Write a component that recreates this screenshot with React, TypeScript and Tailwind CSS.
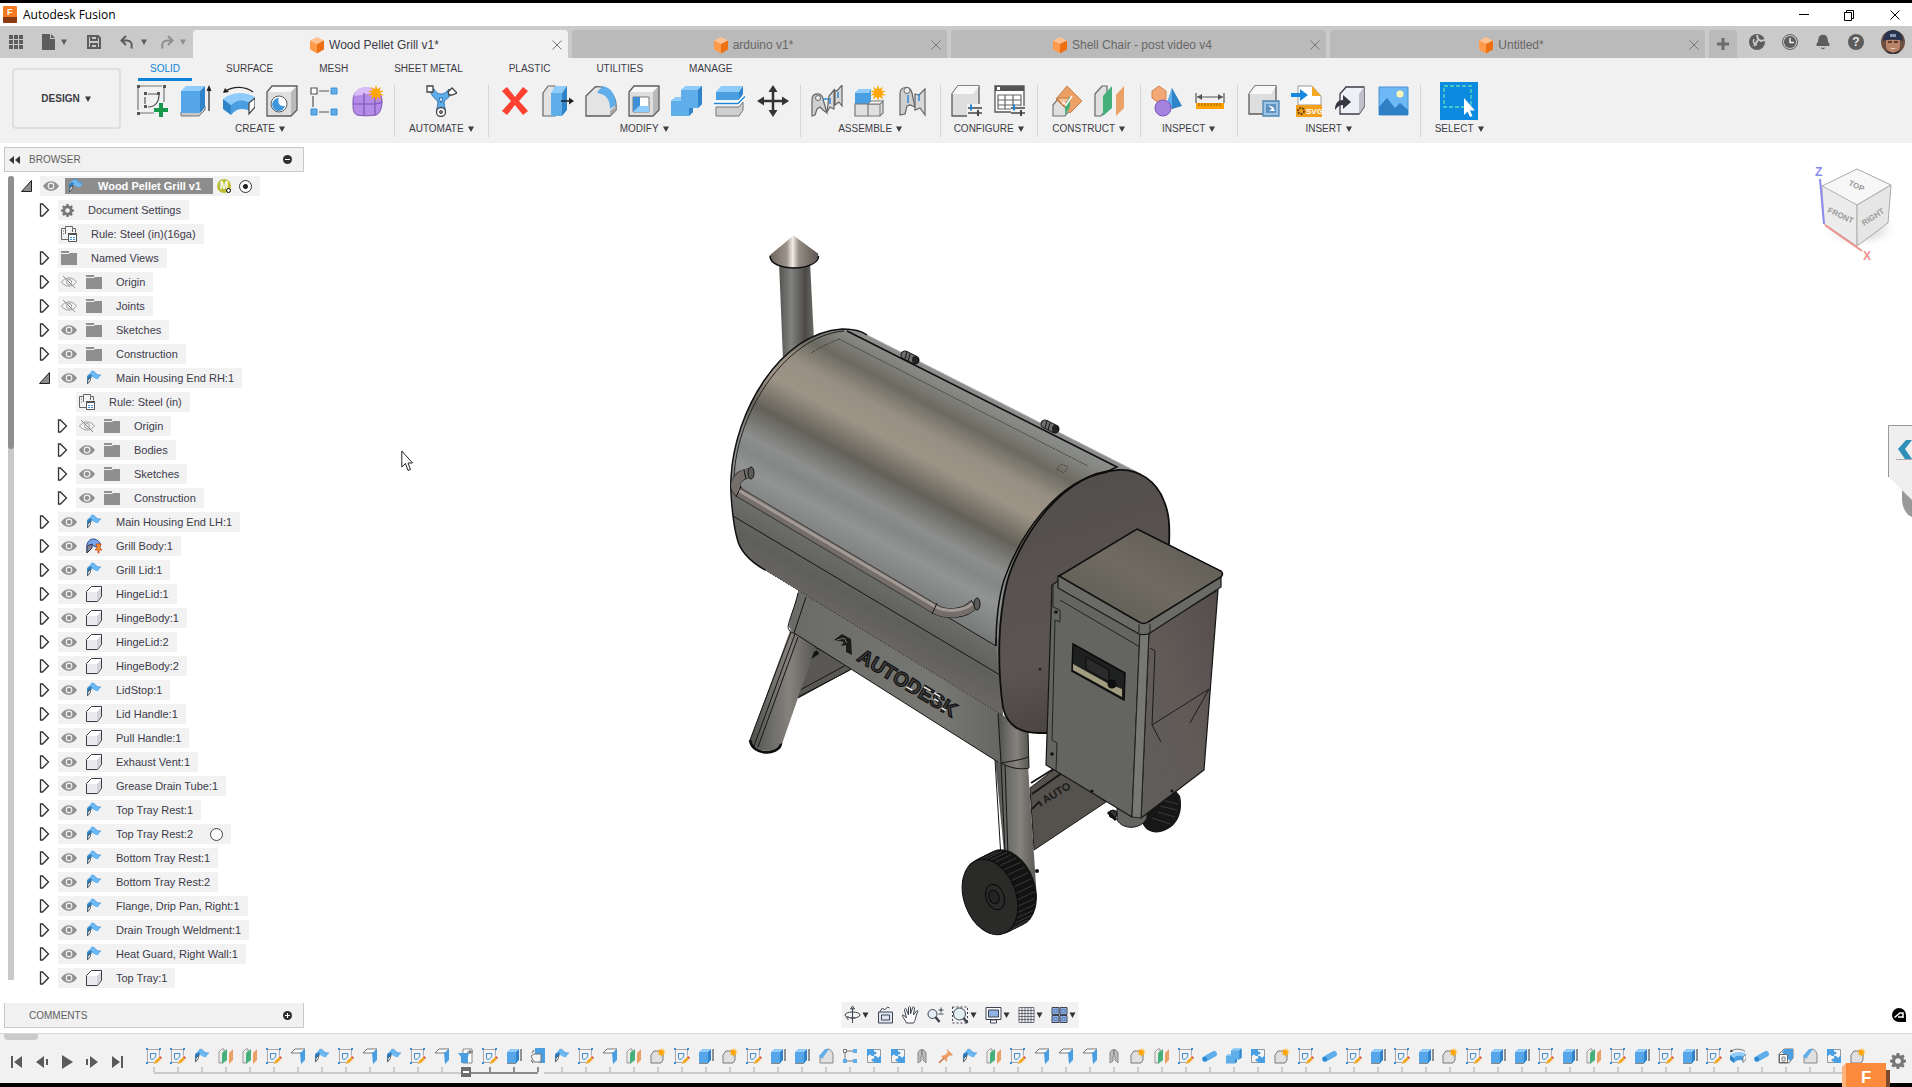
import type { ComponentType, ReactNode } from "react";
import { Bell } from "lucide-react";
import clsx from "clsx";

type IconProps = { className?: string };

/* ---------- small shared glyphs ---------- */

function Caret({ className }: IconProps) {
  return (
    <svg viewBox="0 0 8 8" className={clsx("h-2 w-2 shrink-0", className)} fill="currentColor" aria-hidden="true">
      <path d="M1 1.5h6L4 7z" />
    </svg>
  );
}

function Close({ className }: IconProps) {
  return (
    <svg viewBox="0 0 12 12" className={className} stroke="currentColor" fill="none" aria-hidden="true">
      <path d="M1.5 1.5l9 9M10.5 1.5l-9 9" />
    </svg>
  );
}

function Gear({ className }: IconProps) {
  return (
    <svg viewBox="0 0 16 16" className={className} fill="currentColor" aria-hidden="true">
      <path
        fillRule="evenodd"
        d="M6.7 0h2.6l.4 2.2 1.3.6 1.9-1.3 1.8 1.8-1.3 1.9.6 1.3 2.1.3v2.5l-2.1.4-.6 1.3 1.2 1.9-1.8 1.8-1.8-1.3-1.3.6L9.3 16H6.7l-.4-2.1-1.3-.5-1.9 1.2-1.8-1.8 1.3-1.8L2 9.7 0 9.3V6.8l2.1-.4.6-1.3-1.3-1.8 1.8-1.8L5 2.8l1.3-.6zM8 5.2a2.8 2.8 0 100 5.6 2.8 2.8 0 000-5.6z"
      />
    </svg>
  );
}

function CubeIcon({ className }: IconProps) {
  return (
    <svg viewBox="0 0 16 18" className={className} aria-hidden="true">
      <path d="M8 1l7 3.5L8 8 1 4.5z" fill="#ffc191" />
      <path d="M1 4.5L8 8v9.5l-7-4z" fill="#ff9b4a" />
      <path d="M15 4.5L8 8v9.5l7-4z" fill="#ee7012" />
    </svg>
  );
}

/* ---------- ribbon icons, drawn on a 32px grid ---------- */

function Art({ children, box = 32 }: { children: ReactNode; box?: number }) {
  return (
    <svg viewBox={`0 0 ${box} ${box}`} className="h-full w-full" fill="none" aria-hidden="true">
      {children}
    </svg>
  );
}

const STAR = "M8 0l1.4 4.2L13 1.8l-1.6 4L16 6l-4 2 4 2.4-4.4-.2 1.4 4-3.6-2.4L8 16l-1.4-4.2L3 14.2l1.4-4L0 10.4 4 8 0 6l4.6-.2L3 1.8l3.6 2.4z";

function GreyBox() {
  return (
    <>
      <path d="M1 7L6 1h25v24l-6 6H1z" fill="#dedede" />
      <path d="M1 7L6 1h25l-6 6z" fill="#f8f8f8" />
      <path d="M25 7l6-6v24l-6 6z" fill="#b9b9b9" />
      <path d="M1 7L6 1h25v24l-6 6H1z" stroke="#5c5c5c" strokeWidth="1.3" />
    </>
  );
}

function Sliders() {
  return (
    <>
      <path d="M17 23h14M17 28h14" stroke="#444" strokeWidth="1.3" />
      <path d="M20 19.5v6" stroke="#1f86d8" strokeWidth="2" />
      <path d="M27 25v6" stroke="#444" strokeWidth="2" />
    </>
  );
}

function CreateSketch() {
  return (
    <Art>
      <path d="M3 1h22M1 3v22M27 3v14M3 28h14" stroke="#777" strokeWidth="1.2" />
      <path d="M11 9h10M8 12v7M22 10c0 7-4 12-11 12" stroke="#555" strokeWidth="1.2" />
      <path d="M0 0h3v3H0zM26 0h3v3h-3zM0 27h3v3H0zM7 7h3v3H7zM20 7h3v3h-3zM7 20h3v3H7z" fill="#555" />
      <path d="M22 18h4v5h5v4h-5v5h-4v-5h-5v-4h5z" fill="#17984a" />
    </Art>
  );
}

function Extrude() {
  return (
    <Art>
      <path d="M1 27v4h18l6-6v-4z" fill="#c9c9c9" stroke="#777" />
      <path d="M1 6l5-5h19l-5 5z" fill="#8fcbfb" />
      <path d="M1 6h19v22H1z" fill="#55a6e8" />
      <path d="M20 6l5-5v21l-5 6z" fill="#2f84c9" />
      <path d="M29 26V4" stroke="#222" strokeWidth="1.2" />
      <path d="M29 0l2.500 6h-5z" fill="#222" />
    </Art>
  );
}

function Revolve() {
  return (
    <Art>
      <path d="M3 6c7-5 19-5 27 1" stroke="#222" strokeWidth="1.2" />
      <path d="M0 8l2-5 4 4z" fill="#222" />
      <path d="M0 14c9-7 21-8 32-2l-5 6c-7-4-13-4-19 2z" fill="#8fcbfb" />
      <path d="M0 14l8 6v10l-8-6z" fill="#2f84c9" />
      <path d="M8 20c6-6 12-6 19-2v8c-7-3-13-3-19 4z" fill="#4a9fe2" />
      <path d="M26 18l6-5v9l-6 7z" fill="#fff" stroke="#444" strokeWidth="1.2" />
    </Art>
  );
}

function Hole() {
  return (
    <Art>
      <GreyBox />
      <circle cx="13" cy="19" r="8" fill="#fff" stroke="#5c5c5c" />
      <path d="M13 13a6.500 6.500 0 106 8c-5 1-8-3-6-8z" fill="#3f96dc" />
    </Art>
  );
}

function Pattern() {
  return (
    <Art>
      <path d="M10 6h10M4 11v11M10 27h10" stroke="#555" strokeWidth="1.2" />
      <path d="M2 3h6v6H2z" fill="#fff" stroke="#555" strokeWidth="1.2" />
      <path d="M22 3h6v6h-6zM2 24h6v6H2zM22 24h6v6h-6z" fill="#5fade9" stroke="#3e92d6" />
    </Art>
  );
}

function CreateForm() {
  return (
    <Art>
      <path d="M5 6c4-4 14-4 20 0 4 3 5 6 5 11s-2 12-6 13c-5 1-15 1-19 0-4-2-4-6-4-11s0-10 4-13z" fill="#b58be8" stroke="#7d55b5" />
      <path d="M5 5c4-4 14-4 20 0-2 4-18 5-23 6 0-2 1-4 3-6z" fill="#d8bdf7" />
      <path d="M12 8v23M1 19h22c3 0 6-1 7-3M23 9v21" stroke="#7d55b5" strokeWidth="1.2" />
      <path d={STAR} transform="translate(16 0)" fill="#ffa600" />
    </Art>
  );
}

function Automate() {
  return (
    <Art>
      <path d="M5 5c2 8 6 8 8 12 0 5-2 7-1 10h8c1-3-1-5-1-10 2-4 6-4 8-10l-3-3c-3 4-6 5-8 5S11 8 9 4z" fill="#5fade9" stroke="#2c6fae" />
      <path d="M14 13h4l-2 5z" fill="#fff" stroke="#2c6fae" />
      <path d="M2 1h6v6H2z" fill="#fff" stroke="#444" strokeWidth="1.3" />
      <path d="M23 7l4-4 5 5-5 2-3 0z" fill="#fff" stroke="#444" strokeWidth="1.3" />
      <circle cx="16" cy="27" r="4.500" fill="#fff" stroke="#444" strokeWidth="1.3" />
      <circle cx="16" cy="27" r="1.500" fill="#888" stroke="#444" />
    </Art>
  );
}

function Delete() {
  return (
    <Art>
      <path d="M3 6l5-4 8 10 8-10 5 4-9 10 9 10-5 4-8-10-8 10-5-4 9-10z" fill="#fc4130" />
    </Art>
  );
}

function PressPull() {
  return (
    <Art>
      <path d="M1 8l5-7h7v30H1z" fill="#e2e2e2" stroke="#666" strokeWidth="1.2" />
      <path d="M9 8l4-7h12l-5 7z" fill="#8fcbfb" />
      <path d="M9 8h11v23H9z" fill="#5fade9" />
      <path d="M20 8l5-7v24l-5 6z" fill="#2f84c9" />
      <path d="M19 16h9" stroke="#222" strokeWidth="1.5" />
      <path d="M32 16l-5-3.500v7z" fill="#222" />
    </Art>
  );
}

function Fillet() {
  return (
    <Art>
      <path d="M1 11L10 2c11-2 21 8 21 18v5l-6 6H1z" fill="#e4e4e4" stroke="#5c5c5c" strokeWidth="1.3" />
      <path d="M25 26l6-5v4l-6 6z" fill="#a8a8a8" />
      <path d="M12 1h5c9 1 14 9 14 19l-6 4c0-9-3-14-12-16-2-1 3-5 5-6z" fill="#5fade9" />
    </Art>
  );
}

function Shell() {
  return (
    <Art>
      <GreyBox />
      <path d="M5 12h16v15H5z" fill="#fff" stroke="#777" />
      <path d="M5 12h7v9l-7 6z" fill="#3f8fd6" />
      <path d="M5 27l6-6h10v6z" fill="#8fcbfb" />
    </Art>
  );
}

function Combine() {
  return (
    <Art>
      <path d="M0 16l5-4h5V5l5-4h16v18l-4 4h-5v4l-4 4H0z" fill="#5fade9" />
      <path d="M10 5l5-4h16l-4 4zM0 16l5-4h5v4z" fill="#8fcbfb" />
      <path d="M27 5l4-4v18l-4 4zM18 31l4-4v-4h-4z" fill="#2f84c9" />
    </Art>
  );
}

function SplitBody() {
  return (
    <Art>
      <path d="M2 7l5-6h22l-4 6z" fill="#8fcbfb" />
      <path d="M2 7h23v8H2z" fill="#4a9fe2" />
      <path d="M25 7l4-6v8l-4 6z" fill="#2f84c9" />
      <path d="M2 22h23l4-5v8l-4 6H2z" fill="#cfcfcf" stroke="#777" />
      <path d="M0 18h24l8-7" stroke="#fff" strokeWidth="4" />
      <path d="M0 18.500h24l7-7" stroke="#1f86d8" strokeWidth="1.5" />
    </Art>
  );
}

function Move() {
  return (
    <Art>
      <path d="M16 4v24M4 16h24" stroke="#333" strokeWidth="2.500" />
      <path d="M16 0l4.500 7h-9zM16 32l4.500-7h-9zM0 16l7-4.500v9zM32 16l-7-4.500v9z" fill="#333" />
    </Art>
  );
}

function Joint() {
  return (
    <Art>
      <path d="M1 31V15c0-8 10-8 11-1l4 14-4-3-3-3-3 2-2 6z" fill="#cfcfcf" stroke="#666" strokeWidth="1.2" />
      <circle cx="7" cy="13" r="2.500" fill="#eee" stroke="#666" />
      <path d="M16 27l2-16 5-6v19l-4-2zM24 5l2 1 5-6v21l-3-4-4 3z" fill="#d8d8d8" stroke="#666" strokeWidth="1.2" />
      <path d="M12 14h5M19 13v6M27 7v6" stroke="#2f8bd8" strokeWidth="1.5" />
    </Art>
  );
}

function NewComponent() {
  return (
    <Art>
      <path d="M1 8l4-4h12v12l-2 3H1z" fill="#4a9fe2" />
      <path d="M1 8l4-4h12l-2 4z" fill="#8fcbfb" />
      <path d="M1 19h13v12H1zM14 19h12l3-3v12l-3 3H14z" fill="#e0e0e0" stroke="#777" strokeWidth="1.2" />
      <path d="M14 19l3-3h12l-3 3zM26 19v12" fill="#f6f6f6" stroke="#777" />
      <path d={STAR} transform="translate(16 0)" fill="#ffa600" />
    </Art>
  );
}

function AsBuiltJoint() {
  return (
    <Art>
      <path d="M3 30V9c0-8 10-9 12-1l3 14-5-2-3 1-2 8z" fill="#cfcfcf" stroke="#666" strokeWidth="1.2" />
      <circle cx="10" cy="5.500" r="3" fill="#eee" stroke="#666" />
      <path d="M18 9l4 1 6-6v26l-5-7-5 2z" fill="#d8d8d8" stroke="#666" strokeWidth="1.2" />
      <path d="M11 10v8M22 9v7" stroke="#2f8bd8" strokeWidth="1.5" />
    </Art>
  );
}

function ConfigureModel() {
  return (
    <Art>
      <path d="M1 9L7 1h21v20l-4 3v7H1z" fill="#dedede" stroke="#5c5c5c" strokeWidth="1.3" />
      <path d="M1 9L7 1h21l-6 8z" fill="#f8f8f8" />
      <path d="M16 19h16v13H16z" fill="#f1f1f1" />
      <Sliders />
    </Art>
  );
}

function ConfigureTable() {
  return (
    <Art>
      <path d="M1 1h29v26H1z" fill="#fff" stroke="#555" strokeWidth="1.3" />
      <path d="M1 1h29v5H1z" fill="#555" />
      <path d="M3 2h3v3H3z" fill="#fff" />
      <path d="M4 10h23v14H4zM4 15h23M4 20h23M11 10v14M19 10v14" stroke="#666" strokeWidth="1.2" />
      <path d="M17 21h15v11H17z" fill="#f1f1f1" />
      <Sliders />
    </Art>
  );
}

function OffsetPlane() {
  return (
    <Art>
      <path d="M2 20l5-6h12v11l-5 6H2z" fill="#e0e0e0" stroke="#777" strokeWidth="1.2" />
      <path d="M16 1l15 15-12 12-14-14z" fill="#eda066" stroke="#c9824a" />
      <path d="M6 13h13l-7 8z" fill="#f5c49e" stroke="#c07238" />
      <path d="M14 20l5-9v11l-5 8z" fill="#46b07a" />
      <path d="M12 17l3 3 6-9" stroke="#fff" strokeWidth="1.5" />
    </Art>
  );
}

function Midplane() {
  return (
    <Art>
      <path d="M1 9l7-8h5v22l-6 8H1z" fill="#e0e0e0" stroke="#666" strokeWidth="1.2" />
      <path d="M9 11l9-10v22l-9 8z" fill="#46b07a" />
      <path d="M22 10l8-9v22l-8 8z" fill="#eda066" />
    </Art>
  );
}

function Inspect() {
  return (
    <Art>
      <path d="M8 1l7 5v8l-7 4-7-5V6z" fill="#f2a777" stroke="#d48450" />
      <path d="M21 3l10 18-10 3-5-4z" fill="#2f84c9" />
      <path d="M21 3l-6 17 6 4z" fill="#5fade9" />
      <circle cx="12" cy="23" r="8" fill="#a483e0" stroke="#7d55b5" />
    </Art>
  );
}

function Measure() {
  return (
    <Art>
      <path d="M2 8v10M30 8v10M3 12h26" stroke="#555" strokeWidth="1.2" />
      <path d="M3 12l5-3v6zM29 12l-5-3v6z" fill="#555" />
      <path d="M2 18h28v6H2z" fill="#ffa200" />
      <path d="M5 18v3M8 18v3M11 18v3M14 18v3M17 18v3M20 18v3M23 18v3M26 18v3" stroke="#9a6200" />
    </Art>
  );
}

function InsertDerive() {
  return (
    <Art>
      <path d="M1 9L7 1h21v20l-5 8H1z" fill="#dedede" stroke="#5c5c5c" strokeWidth="1.3" />
      <path d="M1 9L7 1h21l-5 8z" fill="#f8f8f8" />
      <path d="M15 16h16v15H15z" fill="#9fc3e2" stroke="#4d86b3" strokeWidth="1.3" />
      <path d="M18 19h10v9H18z" fill="#5c95c4" />
      <path d="M20 20l5 2 2 4h-6l3-2z" fill="#fff" />
    </Art>
  );
}

function InsertSvg() {
  return (
    <Art>
      <path d="M7 1h14l9 10v9H7z" fill="#fff" stroke="#999" />
      <path d="M21 1l9 10h-9z" fill="#f7a823" />
      <path d="M0 8h9V4l8 6-8 6v-4H0z" fill="#1688e0" />
      <path d="M5 20h26v12H5z" fill="#f2a01d" />
      <circle cx="10" cy="26" r="3" stroke="#6b4300" strokeWidth="2" strokeDasharray="2 1" />
      <text x="15" y="29" fontSize="8" fontWeight="700" fill="#fff" fontFamily="Liberation Sans">
        SVG
      </text>
    </Art>
  );
}

function InsertComponent() {
  return (
    <Art>
      <path d="M6 9l6-7h18v20l-5 7H6z" fill="#eff0f6" stroke="#3b3b45" strokeWidth="1.3" />
      <path d="M25 9l5-7v20l-5 7z" fill="#bfc0cc" />
      <path d="M1 25c0-7 3-10 8-10v-5l8 7-8 7v-4c-3 0-5 1-8 5z" fill="#373741" />
    </Art>
  );
}

function Canvas() {
  return (
    <Art>
      <path d="M2 2h29v28H2z" fill="#6db8f5" stroke="#4a92cf" />
      <circle cx="23" cy="9" r="3.500" fill="#fff6b8" />
      <path d="M2 22l8-9 8 10 5-5 8 7v5H2z" fill="#2f7fc4" />
    </Art>
  );
}

function SelectIcon() {
  return (
    <svg viewBox="0 0 38 38" className="h-full w-full" fill="none" aria-hidden="true">
      <path d="M4 4h27v21H4z" stroke="#5ddcc0" strokeWidth="1.3" strokeDasharray="4 2" />
      <path d="M24 16v17l3.500-3.500 2.500 5.500 2.500-1-2.500-5.500h5z" fill="#fff" />
    </svg>
  );
}

/* ---------- timeline and browser icons, 16px grid ---------- */

function TSketch() {
  return (
    <Art box={16}>
      <path d="M1.500 1.500h12M1.500 1.500v13h7M13.500 1.500v6" stroke="#a8a8a8" />
      <path d="M4 5.500h6c0 4-2 6-5 6M4.500 5v6" stroke="#3f8fd6" />
      <path d="M0 0h2v2H0zM13 0h2v2h-2zM0 14h2v2H0z" fill="#3f8fd6" />
      <path d="M8 16l1-3 4-4 2 2-4 4z" fill="#f7a823" />
      <path d="M13 9l1-1 2 2-1 1z" fill="#e0402a" />
    </Art>
  );
}

function TFlange() {
  return (
    <Art box={16}>
      <path d="M1 6l4-4c4-3 4 4 10 3l-3 4c-3 1-4-2-7-2l-1 2z" fill="#6cb8f3" />
      <path d="M5 2c4-3 4 4 10 3" stroke="#3f8fd6" strokeWidth=".8" />
      <path d="M1 7c1-2 3-3 5-2L4 9l-3 5z" fill="#2d7cc0" />
      <path d="M1.500 14l.5-4 3-3-1 4z" fill="#fff" stroke="#444" strokeWidth=".8" />
    </Art>
  );
}

function TPlane() {
  return (
    <Art box={16}>
      <path d="M1 4l3-3h2v11l-2 3H1z" fill="#eee" stroke="#999" />
      <path d="M4 5l5-4v11l-5 4z" fill="#46b07a" />
      <path d="M11 5l4-4v11l-4 4z" fill="#eda066" />
    </Art>
  );
}

function TBend() {
  return (
    <Art box={16}>
      <path d="M1 5l4-4h10l-4 4z" fill="#fff" stroke="#777" />
      <path d="M10 5l5-4v11l-4 4z" fill="#4a9fe2" />
    </Art>
  );
}

function TUnfold() {
  return (
    <Art box={16}>
      <path d="M5 1h9v14H5z" fill="#fff" stroke="#888" />
      <path d="M0 5h11l-1 4v6H3V9z" fill="#4a9fe2" />
      <path d="M9 4h6M12 2v4" stroke="#555" />
    </Art>
  );
}

function TRefold() {
  return (
    <Art box={16}>
      <path d="M5 0h10v15H9V6H5z" fill="#4a9fe2" />
      <path d="M1 8l3-2h7v8H4z" fill="#f4f4f4" stroke="#777" />
      <path d="M2 5l2-3M1 12l2 3" stroke="#555" />
    </Art>
  );
}

function TExtrude() {
  return (
    <Art box={16}>
      <path d="M1 4l3-3h9l-3 3z" fill="#8fcbfb" />
      <path d="M1 4h10v11H1z" fill="#55a6e8" />
      <path d="M10 4l3-3v11l-3 3z" fill="#2f84c9" />
      <path d="M15 13V1" stroke="#333" />
      <path d="M1 15.500h9" stroke="#888" />
    </Art>
  );
}

function TComponent() {
  return (
    <Art box={16}>
      <path d="M1 7l3-4h6v3h3v6l-2 3H1z" fill="#e0e0e0" stroke="#777" />
      <path d={STAR} transform="translate(7 0) scale(.55)" fill="#ffa600" />
    </Art>
  );
}

function TChamfer() {
  return (
    <Art box={16}>
      <path d="M2 8l7-7c4 0 6 3 6 7v7H2z" fill="#e0e0e0" stroke="#888" />
      <path d="M1 8l6-7h4L4 11z" fill="#5fade9" />
    </Art>
  );
}

function TPattern() {
  return (
    <Art box={16}>
      <path d="M5 3h6M3 5v6M5 13h6" stroke="#777" />
      <path d="M1.500 1.500h3v3h-3z" fill="#fff" stroke="#777" />
      <path d="M11 1h4v4h-4zM1 11h4v4H1zM11 11h4v4h-4z" fill="#5fade9" />
    </Art>
  );
}

function TMirror() {
  return (
    <Art box={16}>
      <path d="M1.500 1.500h13v13h-13z" fill="#f4f4f4" stroke="#999" />
      <path d="M1 1h7v7H1zM8 8h7v7H8z" fill="#4a9fe2" />
      <circle cx="9" cy="5" r="1.500" fill="#4a9fe2" />
      <circle cx="7" cy="12" r="1.500" fill="#4a9fe2" />
      <circle cx="4" cy="8" r="1.500" fill="#f4f4f4" />
      <circle cx="12" cy="8" r="1.500" fill="#f4f4f4" />
    </Art>
  );
}

function TJoint() {
  return (
    <Art box={16}>
      <path d="M4 15V5c0-4 7-5 8 0v10l-3-3V8H7v5z" fill="#bcbcbc" stroke="#8a8a8a" />
      <path d="M8 2v5" stroke="#666" />
    </Art>
  );
}

function TPin() {
  return (
    <Art box={16}>
      <path d="M9 1l6 6-2 1-1-1-3 3v4L3 8l4-1 3-3-1-1z" fill="#ee9a63" />
      <path d="M6 10l-5 5" stroke="#c8713a" strokeWidth="1.5" />
    </Art>
  );
}

function TPipe() {
  return (
    <Art box={16}>
      <path d="M3 11l9-5" stroke="#5fade9" strokeWidth="6" strokeLinecap="round" />
      <circle cx="3" cy="11" r="2" fill="#2f84c9" />
    </Art>
  );
}

function TShell() {
  return (
    <Art box={16}>
      <path d="M1 6l5-5h9v9l-4 5H1z" fill="#eee" stroke="#777" />
      <path d="M4 4l3-3h8v9l-3 3z" fill="#4a9fe2" />
      <path d="M1.500 6.500h8v8h-8z" fill="#fff" stroke="#666" />
      <path d="M4 9h3v4H4z" fill="#e4e4e4" stroke="#888" />
    </Art>
  );
}

function Folder() {
  return (
    <Art box={16}>
      <path d="M0 1h8v2H0zM0 4h8l1-1h7v12H0z" fill="#8f8f8f" />
    </Art>
  );
}

function Body() {
  return (
    <Art box={16}>
      <path d="M.5 5.500l5-5h10v10l-4 5H.5z" fill="#fff" stroke="#3c3c44" strokeLinejoin="round" />
      <path d="M1 6h10v9H1z" fill="#e9e9ee" />
      <path d="M11 6l4-4v8l-4 5z" fill="#d4d4dc" />
    </Art>
  );
}

function PinnedFlange() {
  return (
    <Art box={16}>
      <path d="M1 6c2-6 9-7 13-1v4h-4L6 7l-5 8z" fill="#7aa5e6" stroke="#2b4f9a" />
      <path d="M1 15V8l5-2v4z" fill="#889" stroke="#335" />
      <path d="M10 6h5v1l-1 1v2l2 2h-3v3h-1v-3H9l2-2V8l-1-1z" fill="#f29a2e" stroke="#c9341c" strokeWidth=".7" />
    </Art>
  );
}

function RuleIcon() {
  return (
    <Art box={16}>
      <path d="M7 13.500H.5v-11h4v-2h7v2h3v4M4.500 2v6M11.500 3v3M2 5h1M2 8h1" stroke="#666" />
      <path d="M7.500 7.500h8v8h-8z" fill="#fff" stroke="#555" />
      <path d="M7 7h9v2H7z" fill="#555" />
      <path d="M9 11.500h2M12 11.500h2M9 13.500h2M12 13.500h2" stroke="#3f8fd6" />
    </Art>
  );
}

function Eye() {
  return (
    <Art box={16}>
      <path d="M0 8c4-6.500 12-6.500 16 0-4 6.500-12 6.500-16 0z" fill="#919191" />
      <circle cx="8" cy="8" r="3.400" fill="#f2f2f2" />
      <circle cx="8" cy="8" r="2.200" fill="#919191" />
    </Art>
  );
}

function EyeOff() {
  return (
    <Art box={16}>
      <path d="M.5 8c4-5.500 11-5.500 15 0-4 5.500-11 5.500-15 0z" stroke="#a0a0a0" />
      <circle cx="8" cy="8" r="2.500" stroke="#a0a0a0" />
      <path d="M2 2l12 12" stroke="#8a8a8a" />
    </Art>
  );
}

/* ---------- data ---------- */

const documents = [
  { name: "Wood Pellet Grill v1*", active: true },
  { name: "arduino v1*" },
  { name: "Shell Chair - post video v4" },
  { name: "Untitled*" },
];

const ribbonTabs = ["SOLID", "SURFACE", "MESH", "SHEET METAL", "PLASTIC", "UTILITIES", "MANAGE"];

type Group = { label: string; tools: [string, ComponentType][]; pad?: string };

const groups: Group[] = [
  {
    label: "CREATE",
    tools: [
      ["Create Sketch", CreateSketch],
      ["Extrude", Extrude],
      ["Revolve", Revolve],
      ["Hole", Hole],
      ["Rectangular Pattern", Pattern],
      ["Create Form", CreateForm],
    ],
  },
  { label: "AUTOMATE", tools: [["Automated Modeling", Automate]], pad: "px-[14px]" },
  {
    label: "MODIFY",
    tools: [
      ["Delete", Delete],
      ["Press Pull", PressPull],
      ["Fillet", Fillet],
      ["Shell", Shell],
      ["Combine", Combine],
      ["Split Body", SplitBody],
      ["Move/Copy", Move],
    ],
  },
  {
    label: "ASSEMBLE",
    tools: [
      ["Joint", Joint],
      ["New Component", NewComponent],
      ["As-Built Joint", AsBuiltJoint],
    ],
  },
  {
    label: "CONFIGURE",
    tools: [
      ["Configure", ConfigureModel],
      ["Configuration Table", ConfigureTable],
    ],
  },
  {
    label: "CONSTRUCT",
    tools: [
      ["Offset Plane", OffsetPlane],
      ["Midplane", Midplane],
    ],
    pad: "px-2",
  },
  {
    label: "INSPECT",
    tools: [
      ["Section Analysis", Inspect],
      ["Measure", Measure],
    ],
  },
  {
    label: "INSERT",
    tools: [
      ["Insert Derive", InsertDerive],
      ["Insert SVG", InsertSvg],
      ["Insert Component", InsertComponent],
      ["Canvas", Canvas],
    ],
  },
];

type NodeKind = "folder" | "flange" | "pinned" | "body" | "rule" | "settings";
type TreeNode = {
  name: string;
  kind: NodeKind;
  level?: 1 | 2;
  eye?: "on" | "off" | "none";
  open?: boolean;
  radio?: boolean;
};

const tree: TreeNode[] = [
  { name: "Document Settings", kind: "settings", eye: "none" },
  { name: "Rule: Steel (in)(16ga)", kind: "rule", eye: "none" },
  { name: "Named Views", kind: "folder", eye: "none" },
  { name: "Origin", kind: "folder", eye: "off" },
  { name: "Joints", kind: "folder", eye: "off" },
  { name: "Sketches", kind: "folder" },
  { name: "Construction", kind: "folder" },
  { name: "Main Housing End RH:1", kind: "flange", open: true },
  { name: "Rule: Steel (in)", kind: "rule", eye: "none", level: 2 },
  { name: "Origin", kind: "folder", eye: "off", level: 2 },
  { name: "Bodies", kind: "folder", level: 2 },
  { name: "Sketches", kind: "folder", level: 2 },
  { name: "Construction", kind: "folder", level: 2 },
  { name: "Main Housing End LH:1", kind: "flange" },
  { name: "Grill Body:1", kind: "pinned" },
  { name: "Grill Lid:1", kind: "flange" },
  { name: "HingeLid:1", kind: "body" },
  { name: "HingeBody:1", kind: "body" },
  { name: "HingeLid:2", kind: "body" },
  { name: "HingeBody:2", kind: "body" },
  { name: "LidStop:1", kind: "flange" },
  { name: "Lid Handle:1", kind: "body" },
  { name: "Pull Handle:1", kind: "body" },
  { name: "Exhaust Vent:1", kind: "body" },
  { name: "Grease Drain Tube:1", kind: "body" },
  { name: "Top Tray Rest:1", kind: "flange" },
  { name: "Top Tray Rest:2", kind: "flange", radio: true },
  { name: "Bottom Tray Rest:1", kind: "flange" },
  { name: "Bottom Tray Rest:2", kind: "flange" },
  { name: "Flange, Drip Pan, Right:1", kind: "flange" },
  { name: "Drain Trough Weldment:1", kind: "flange" },
  { name: "Heat Guard, Right Wall:1", kind: "flange" },
  { name: "Top Tray:1", kind: "body" },
];

const kindIcons: Record<Exclude<NodeKind, "settings">, ComponentType> = {
  folder: Folder,
  flange: TFlange,
  pinned: PinnedFlange,
  body: Body,
  rule: RuleIcon,
};

const features: Record<string, [string, ComponentType]> = {
  s: ["Sketch", TSketch],
  f: ["Flange", TFlange],
  p: ["Plane", TPlane],
  b: ["Bend", TBend],
  u: ["Unfold", TUnfold],
  r: ["Refold", TRefold],
  e: ["Extrude", TExtrude],
  c: ["Component", TComponent],
  h: ["Chamfer", TChamfer],
  n: ["Pattern", TPattern],
  m: ["Mirror", TMirror],
  j: ["Joint", TJoint],
  g: ["Ground", TPin],
  i: ["Pipe", TPipe],
  k: ["Combine", Combine],
  v: ["Revolve", Revolve],
  l: ["Shell", TShell],
};

// One letter per timeline feature, in build order
const history = "ssfppsbfsbfsbuserfsbpcsecseehnmmjgfpsbbbjcpsikmcsisesecseesepsesesvilhmc".split("");
const MARKER = 13;
const GROUP_END = 16;

/* ---------- chrome ---------- */

function TitleBar() {
  return (
    <div className="flex h-[23px] items-center bg-white pl-[3px] pr-[11px] text-black">
      <svg viewBox="0 0 14 17" className="h-[17px] w-[14px]" aria-hidden="true">
        <rect width="14" height="17" rx="1" fill="#f47a1f" />
        <path d="M0 11h14v5a1 1 0 01-1 1H1a1 1 0 01-1-1z" fill="#8c3a10" />
        <text x="4" y="9" fontSize="9" fontWeight="700" fill="#fff" fontFamily="Liberation Sans">
          F
        </text>
      </svg>
      <span className="ml-[6px] font-['Open_Sans',sans-serif] text-xs leading-4">Autodesk Fusion</span>
      <div className="ml-auto flex items-center gap-[34px]">
        <button aria-label="Minimize" className="flex h-5 w-3 items-center justify-end">
          <span className="h-px w-[10px] bg-black" />
        </button>
        <button aria-label="Restore" className="h-3 w-3">
          <svg viewBox="0 0 12 12" className="h-3 w-3" fill="none" stroke="#000" aria-hidden="true">
            <path d="M1.500 3.500h7v8h-7zM3.500 3.500v-2h7v8h-2" />
          </svg>
        </button>
        <button aria-label="Close window" className="h-3 w-3">
          <Close className="h-3 w-3" />
        </button>
      </div>
    </div>
  );
}

function QuickAccess() {
  return (
    <div className="flex h-full w-[193px] shrink-0 items-center pl-[9px] text-[#5d5d5d]">
      <button aria-label="Data Panel">
        <svg viewBox="0 0 14 14" className="h-[14px] w-[14px]" fill="currentColor" aria-hidden="true">
          <path d="M0 0h4v4H0zM5 0h4v4H5zM10 0h4v4h-4zM0 5h4v4H0zM5 5h4v4H5zM10 5h4v4h-4zM0 10h4v4H0zM5 10h4v4H5zM10 10h4v4h-4z" />
        </svg>
      </button>
      <button aria-label="File" className="ml-[19px] flex items-center gap-[5px]">
        <svg viewBox="0 0 13 16" className="h-4 w-[13px]" fill="currentColor" aria-hidden="true">
          <path d="M0 0h8v5h5v11H0zM9 0l4 4H9z" />
        </svg>
        <Caret />
      </button>
      <button aria-label="Save" className="ml-[19px]">
        <svg viewBox="0 0 14 14" className="h-[14px] w-[14px]" fill="none" stroke="currentColor" strokeWidth="2" aria-hidden="true">
          <path d="M1 1h10l2 2v10H1zM4 1v4h6V1M4 13V9h6v4" />
        </svg>
      </button>
      <button aria-label="Undo" className="ml-[19px] flex items-center gap-[6px]">
        <svg viewBox="0 0 14 14" className="h-[14px] w-[14px]" fill="none" stroke="currentColor" strokeWidth="2" aria-hidden="true">
          <path d="M6 1L1.500 5.500 6 10M2 5.500h5c4 0 5.500 3 4.500 8" />
        </svg>
        <Caret />
      </button>
      <button aria-label="Redo" className="ml-3 flex items-center gap-[5px] text-[#8f8f8f]">
        <svg viewBox="0 0 14 14" className="h-[14px] w-[14px]" fill="none" stroke="currentColor" strokeWidth="2" aria-hidden="true">
          <path d="M8 1l4.500 4.500L8 10M12 5.500H7c-4 0-5.500 3-4.500 8" />
        </svg>
        <Caret />
      </button>
    </div>
  );
}

function DocumentBar() {
  return (
    <div className="flex h-8 items-end bg-[#cacaca]">
      <QuickAccess />
      <div className="flex min-w-0 flex-1 gap-1">
        {documents.map((doc) => (
          <div
            key={doc.name}
            className={clsx(
              "flex h-7 min-w-0 flex-1 items-center rounded-t pr-[5px] pt-px text-xs",
              doc.active ? "bg-[#f1f1f1] text-[#3c3c46]" : "bg-[#bababa] text-[#676767]",
            )}
          >
            <button className="flex min-w-0 flex-1 items-center justify-center gap-1 pl-1">
              <CubeIcon className="h-[18px] w-4 shrink-0" />
              <span className="truncate">{doc.name}</span>
            </button>
            <button aria-label={`Close ${doc.name}`} className="text-[#777]">
              <Close className="h-3 w-3" />
            </button>
          </div>
        ))}
        <button aria-label="New Design" className="flex h-7 w-7 shrink-0 items-center justify-center rounded-t bg-[#bababa]">
          <svg viewBox="0 0 12 12" className="h-3 w-3" fill="#6c6c6c" aria-hidden="true">
            <path d="M4.500 0h3v4.500H12v3H7.500V12h-3V7.500H0v-3h4.500z" />
          </svg>
        </button>
      </div>
      <div className="flex h-full w-[175px] shrink-0 items-center gap-[17px] pl-3 text-[#5d5d5d]">
        <button aria-label="Extensions" className="flex h-4 w-4 items-center justify-center">
          <svg viewBox="0 0 16 16" className="h-4 w-4" fill="none" aria-hidden="true">
            <circle cx="8" cy="8" r="8" fill="currentColor" />
            <path d="M8 1l1 4 3 2 4-1M9 6l-4 6" stroke="#cacaca" strokeWidth="2" />
            <path d="M5 5a4 4 0 003 6" stroke="#cacaca" strokeWidth="1.500" />
          </svg>
        </button>
        <button aria-label="Job Status">
          <svg viewBox="0 0 16 16" className="h-4 w-4" fill="none" aria-hidden="true">
            <circle cx="8" cy="8" r="7.500" stroke="currentColor" />
            <circle cx="8" cy="8" r="6" fill="currentColor" />
            <path d="M8 4v4.500h4" stroke="#eee" strokeWidth="1.5" />
          </svg>
        </button>
        <button aria-label="Notifications">
          <Bell size={16} fill="currentColor" />
        </button>
        <button aria-label="Help" className="h-4 w-4 rounded-full bg-[#5d5d5d] text-xs font-bold leading-4 text-[#e8e8e8]">
          ?
        </button>
        <button aria-label="Account" className="h-6 w-6 overflow-hidden rounded-full">
          <svg viewBox="0 0 24 24" className="h-6 w-6" aria-hidden="true">
            <rect width="24" height="24" fill="#6d4f42" />
            <path d="M5 10h14v6c0 4-4 7-7 7s-7-3-7-7z" fill="#b98468" />
            <path d="M2 11C2 3 8 0 12 0s10 3 10 11c-6-2-14-2-20 0z" fill="#28334f" />
            <path d="M9 4h6v3H9z" fill="#8d98b5" />
            <path d="M7 12h4M13 12h4" stroke="#3a241c" strokeWidth="1.5" />
            <path d="M9 18c2 1 4 1 6 0z" fill="#fff" />
            <path d="M0 24c4-4 8-3 12-1 4-2 8-3 12 1z" fill="#2c2c33" />
          </svg>
        </button>
      </div>
    </div>
  );
}

function GroupLabel({ children }: { children: string }) {
  return (
    <button className="mx-auto mt-1 flex items-center gap-1 text-[10px] leading-4 text-[#3c3c46]">
      {children}
      <Caret className="-mx-px" />
    </button>
  );
}

function Ribbon() {
  return (
    <header className="flex bg-[#f1f1f1] pb-[6px]">
      <button className="ml-3 mt-[10px] flex h-[61px] w-[109px] shrink-0 items-center justify-center gap-1 rounded border-2 border-[#dfdfdf] text-[10px] font-bold text-[#3c3c46]">
        DESIGN
        <Caret />
      </button>
      <div className="ml-[5px]">
        <nav className="flex gap-[22px] pl-3">
          {ribbonTabs.map((tab, i) => (
            <button
              key={tab}
              className={clsx(
                "h-[23px] border-b-[3px] px-3 pt-[2px] text-[10px] leading-4",
                i === 0 ? "border-[#0b84d8] text-[#0b84d8]" : "border-transparent text-[#3c3c46]",
              )}
            >
              {tab}
            </button>
          ))}
        </nav>
        <div className="mt-1 flex">
          {groups.map(({ label, tools, pad }) => (
            <div key={label} className={clsx("h-[52px] border-r border-[#d6d6d6]", pad ?? "px-[5px]")}>
              <div className="flex h-8 justify-center">
                {tools.map(([name, Icon]) => (
                  <button key={name} aria-label={name} className="flex w-[43px] justify-center">
                    <span className="h-8 w-8">
                      <Icon />
                    </span>
                  </button>
                ))}
              </div>
              <GroupLabel>{label}</GroupLabel>
            </div>
          ))}
          <div className="px-[14px]">
            <div className="flex h-8 items-center justify-center">
              <button aria-label="Select" className="h-[38px] w-[38px] shrink-0 bg-[#0b8ae0]">
                <SelectIcon />
              </button>
            </div>
            <GroupLabel>SELECT</GroupLabel>
          </div>
        </div>
      </div>
    </header>
  );
}

/* ---------- browser panel ---------- */

function Expander({ open, name }: { open?: boolean; name: string }) {
  return (
    <button aria-label={`Toggle ${name}`} className="h-[14px] w-[11px] shrink-0">
      <svg viewBox="0 0 11 14" className="h-[14px] w-[11px]" aria-hidden="true">
        {open ? (
          <path d="M10.500 1.500v11H.5z" fill="#8c8c8c" stroke="#222" />
        ) : (
          <path d="M1.500 1h2l6 6-6 6h-2z" fill="#fafafa" stroke="#333" strokeWidth="1.3" />
        )}
      </svg>
    </button>
  );
}

function EyeToggle({ hidden, name }: { hidden?: boolean; name: string }) {
  return (
    <button aria-label={`${hidden ? "Show" : "Hide"} ${name}`} className="h-4 w-4 shrink-0">
      {hidden ? <EyeOff /> : <Eye />}
    </button>
  );
}

function TreeRow({ node }: { node: TreeNode }) {
  const { name, kind, level = 1, eye = "on", open, radio } = node;
  const Icon = kind === "settings" ? null : kindIcons[kind];
  return (
    <li className={clsx("flex h-5 items-center gap-2", level === 1 ? "pl-[25px]" : "pl-[43px]")}>
      {kind === "rule" ? <span className="w-[11px] shrink-0" /> : <Expander open={open} name={name} />}
      <div className="flex h-5 items-center gap-[9px] bg-[#f2f2f2] pl-[3px] pr-2">
        {eye !== "none" && <EyeToggle hidden={eye === "off"} name={name} />}
        <button className="flex items-center gap-[14px] whitespace-nowrap text-[11px] leading-5 text-[#3b3b4a]">
          {Icon ? (
            <span className="h-4 w-4">
              <Icon />
            </span>
          ) : (
            <Gear className="h-[13px] w-[13px] text-[#777]" />
          )}
          {name}
        </button>
        {radio && (
          <input
            type="radio"
            name="active-component"
            aria-label={`Activate ${name}`}
            className="ml-2 h-[13px] w-[13px] appearance-none rounded-full border border-[#444] bg-white"
          />
        )}
      </div>
    </li>
  );
}

function BrowserPanel() {
  return (
    <aside className="relative z-10 flex w-[304px] flex-col pb-[5px] pl-1 pt-1">
      <div className="flex h-[25px] items-center border border-[#c8c8c8] bg-[#f1f1f1] pl-1 pr-[11px] text-[10px] text-[#5f5f5f]">
        <button aria-label="Collapse browser" className="h-2 w-[11px]">
          <svg viewBox="0 0 11 8" className="h-2 w-[11px]" fill="#333" aria-hidden="true">
            <path d="M5 0v8L0 4zM11 0v8L6 4z" />
          </svg>
        </button>
        <h2 className="ml-[9px]">BROWSER</h2>
        <button aria-label="Hide browser" className="ml-auto flex h-[9px] w-[9px] items-center justify-center rounded-full bg-[#2e2e2e]">
          <span className="h-px w-[5px] bg-white" />
        </button>
      </div>

      <div className="mt-1 flex pl-1">
        <div className="mb-3 w-[6px] shrink-0 rounded-t-full bg-[#c9c9cb]">
          <div className="h-[34%] rounded-full bg-[#8f8f8f]" />
        </div>
        <ul className="flex flex-col gap-1 pb-1">
          <li className="flex h-5 items-center gap-2 pl-[7px]">
            <Expander open name="Wood Pellet Grill v1" />
            <div className="flex h-5 items-center bg-[#f2f2f2] pl-[3px] pr-2">
              <EyeToggle name="Wood Pellet Grill v1" />
              <button className="ml-[6px] flex h-4 items-center gap-[14px] whitespace-nowrap bg-[#8d8d8d] pl-[3px] pr-3 text-[11px] font-bold text-white">
                <span className="h-4 w-4">
                  <TFlange />
                </span>
                Wood Pellet Grill v1
              </button>
              <span className="relative ml-1 h-[14px] w-[14px] rounded-full bg-[#bcbf35] text-center text-[10px] font-bold leading-[14px] text-white">
                M
                <span className="absolute bottom-0 right-0 h-[5px] w-[5px] rounded-full border border-black bg-white" />
              </span>
              <input
                type="radio"
                name="active-component"
                defaultChecked
                aria-label="Activate Wood Pellet Grill v1"
                className="ml-2 h-[13px] w-[13px] appearance-none rounded-full border border-[#333] bg-white bg-[radial-gradient(circle,#222_2px,transparent_3px)]"
              />
            </div>
          </li>
          {tree.map((node, i) => (
            <TreeRow key={i} node={node} />
          ))}
        </ul>
      </div>

      <div className="mt-auto flex h-[25px] items-center border border-t-0 border-[#c8c8c8] bg-[#f1f1f1] pl-6 pr-[11px] text-[10px] text-[#5f5f5f]">
        <h2>COMMENTS</h2>
        <button aria-label="Show comments" className="ml-auto h-[9px] w-[9px]">
          <svg viewBox="0 0 9 9" className="h-[9px] w-[9px]" aria-hidden="true">
            <circle cx="4.500" cy="4.500" r="4.500" fill="#2e2e2e" />
            <path d="M2 4.500h5M4.500 2v5" stroke="#fff" />
          </svg>
        </button>
      </div>
    </aside>
  );
}

/* ---------- viewport ---------- */

// Point on the rim of the front wheel, whose ellipse leans 20 degrees
function rimPoint(degrees: number) {
  const a = (degrees * Math.PI) / 180;
  const px = 26 * Math.cos(a);
  const py = 39 * Math.sin(a);
  return [990 + px * 0.94 + py * 0.34, 897 - px * 0.34 + py * 0.94];
}

function Grill() {
  const treads = Array.from({ length: 17 }, (_, i) => rimPoint(-82 + i * 10));
  return (
    <svg viewBox="676 228 560 720" className="h-[720px] w-[560px] shrink-0" fill="none" role="img" aria-label="Wood pellet grill model">
      <defs>
        <linearGradient id="drum" gradientUnits="userSpaceOnUse" x1="980" y1="398" x2="850" y2="640">
          <stop offset="0" stopColor="#898c89" />
          <stop offset=".03" stopColor="#858680" />
          <stop offset=".11" stopColor="#6c6b61" />
          <stop offset=".2" stopColor="#978f83" />
          <stop offset=".29" stopColor="#9d9487" />
          <stop offset=".41" stopColor="#636158" />
          <stop offset=".52" stopColor="#8d8f8e" />
          <stop offset=".57" stopColor="#858787" />
          <stop offset=".63" stopColor="#919493" />
          <stop offset=".7" stopColor="#858787" />
          <stop offset=".78" stopColor="#747674" />
          <stop offset="1" stopColor="#62625f" />
        </linearGradient>
        <linearGradient id="belly" gradientUnits="userSpaceOnUse" x1="880" y1="580" x2="852" y2="630">
          <stop offset="0" stopColor="#6b6d69" />
          <stop offset=".5" stopColor="#5e5f5c" />
          <stop offset="1" stopColor="#6b6663" />
        </linearGradient>
        <linearGradient id="cap" x1=".3" y1="0" x2=".5" y2="1">
          <stop offset="0" stopColor="#514e4c" />
          <stop offset=".4" stopColor="#585250" />
          <stop offset=".7" stopColor="#5a5552" />
          <stop offset="1" stopColor="#474240" />
        </linearGradient>
        <linearGradient id="pipe">
          <stop offset="0" stopColor="#535450" />
          <stop offset=".35" stopColor="#80827f" />
          <stop offset=".75" stopColor="#4b4946" />
          <stop offset="1" stopColor="#6b6c69" />
        </linearGradient>
        <linearGradient id="cone">
          <stop offset="0" stopColor="#6c655d" />
          <stop offset=".35" stopColor="#9c948b" />
          <stop offset=".47" stopColor="#f1ece6" />
          <stop offset=".6" stopColor="#958d84" />
          <stop offset="1" stopColor="#5b5650" />
        </linearGradient>
        <linearGradient id="leg">
          <stop offset="0" stopColor="#4f504d" />
          <stop offset=".35" stopColor="#6f6f6c" />
          <stop offset=".6" stopColor="#86817c" />
          <stop offset="1" stopColor="#555652" />
        </linearGradient>
        <linearGradient id="skirt" x1="0" y1="0" x2="1" y2="0">
          <stop offset="0" stopColor="#6a6b67" />
          <stop offset=".7" stopColor="#777874" />
          <stop offset="1" stopColor="#656662" />
        </linearGradient>
        <linearGradient id="side" x1="0" y1="1" x2="1" y2="0">
          <stop offset="0" stopColor="#5f5e5a" />
          <stop offset=".5" stopColor="#615b58" />
          <stop offset="1" stopColor="#544d4c" />
        </linearGradient>
        <linearGradient id="hopperTop" x1="0" y1="1" x2="1" y2="0">
          <stop offset="0" stopColor="#5b5953" />
          <stop offset=".5" stopColor="#6f6b62" />
          <stop offset="1" stopColor="#5c5953" />
        </linearGradient>
      </defs>

      {/* exhaust stack */}
      <path d="M779 262h31l4 78-31 20z" fill="url(#pipe)" />
      <path d="M793.500 235.500l24.500 18c2 6-8 14.500-24 14.500s-26-7-24-13z" fill="url(#cone)" />
      <path d="M770 256c0 8 12 12 24.500 12s24-5 24-12" stroke="#111" strokeWidth="1.5" />

      {/* rear cross bars */}
      <path d="M813 646l40 22-55 30 5-22z" fill="#5a5855" stroke="#151515" />
      <path d="M800 690l48-26M798 697l52-27" stroke="#151515" />
      <path d="M806 660l12-8" stroke="#111" strokeWidth="4" />
      <path d="M1030 788l26-20 50 34-72 48z" fill="#55514d" stroke="#151515" />
      <path d="M1031 783l24-15M1032 794l30-21" stroke="#151515" strokeWidth="2" />
      <text x="1045" y="804" transform="rotate(-31 1045 804)" fontSize="11" fontWeight="700" fill="#1b1b1b" fontFamily="Liberation Sans">
        AUTO
      </text>
      <path d="M1032 809l7-7 3 4" stroke="#1b1b1b" strokeWidth="2" />

      {/* rear wheel and auger motor */}
      <path d="M1142 822c4 12 16 12 24 8 14-6 17-22 14-34l-8-10-24 14z" fill="#171717" />
      <path d="M1162 800l16 4M1160 806l17 4M1158 812l17 5M1152 818l18 6" stroke="#3b3b3b" />
      <path d="M1117 806v14c6 10 24 10 30-2v-10z" fill="#63635f" stroke="#151515" />
      <circle cx="1113" cy="814" r="4" fill="#333" stroke="#111" />
      <path d="M1108 812l8 8" stroke="#111" strokeWidth="3" />

      {/* left leg */}
      <path d="M791 628l25 18-34 98c-3 8-28 12-32-4z" fill="url(#leg)" />
      <path d="M791 632l-41 108c2 16 28 14 32 3M795 634l-41 112M798 637l-40 110" stroke="#151515" />
      <path d="M750 740c2 16 28 16 31 4" stroke="#0c0c0c" strokeWidth="2.500" />

      {/* front right leg */}
      <path d="M995 758l33 8 9 134-30-16z" fill="url(#leg)" />
      <path d="M995 760l6 98M1001 762l4 92M1005 764l3 92" stroke="#151515" />
      <circle cx="1037" cy="871" r="2" fill="#111" />

      {/* front skirt */}
      <path d="M798 588l8 4 197 119v52l-5-1-204-129-5-6c0-10 6-20 9-35z" fill="url(#skirt)" />
      <path d="M798 593c-3 14-9 26-10 34 1 5 4 6 6 6l204 129M806 597l-12 36" stroke="#151515" />
      <path d="M998 712l30 20 1 35c-8 3-20 0-28-4z" fill="url(#leg)" />
      <path d="M998 714l3 49c8 5 20 7 28 5l-1-36M1002 763c8-2 20-3 26-6" stroke="#151515" />
      <path d="M834 640l8-6 9 5 1 16-6-3v-7l-5 1 3-4-10-2z" fill="#1b1b1b" />
      <path d="M837 640l7-2 3 5" stroke="#777874" />
      <g transform="translate(856 660) rotate(31)">
        <text fontSize="20" fontWeight="700" fill="#41413e" stroke="#111" strokeWidth="1.2" fontFamily="Liberation Sans">
          AUTODESK
        </text>
        <path d="M57 -3h7M72 -12h8M84 -12h7M87 -7h5M98 -3h5" stroke="#eee" strokeWidth="1.5" />
      </g>

      {/* drum */}
      <path
        d="M842 329c10-1 18 2 25 6l270 137-20 4c-40 6-80 50-105 104-10 25-14 60-12 105l3 30-238-145c-14-8-25-18-28-32-4-14-7-46-6-60 3-66 49-145 111-149z"
        fill="url(#drum)"
      />
      <path d="M732 490l264 157 4 38 3 30-238-145c-14-8-25-18-28-32-3-12-4-34-5-48z" fill="url(#belly)" />
      <path d="M847 330c8-1 14 2 20 5l270 137-20-4z" fill="#8b8d8b" />
      <path d="M867 335l270 137" stroke="#b2b4b2" />
      <path d="M733 516l267 159M733 489l263 157v-8" stroke="#151515" />
      <path d="M765 570l237 145" stroke="#222" strokeDasharray="1 2" />
      <path d="M765 570c-14-8-25-18-28-32-4-14-7-46-6-60 3-66 49-145 111-149 12 0 20 2 25 6" stroke="#111" strokeWidth="1.5" />
      <path d="M734 484c-1-66 50-148 110-153" stroke="#222" />
      <path d="M847 331l270 136-13 6" stroke="#0e0e0e" strokeWidth="1.5" />
      <path d="M839 339l249 127M839 339l-16 7-12 7" stroke="#2f2f2c" strokeDasharray="2 1" strokeWidth=".8" />
      <path d="M1057 469l4-5 7 3-4 6z" stroke="#3b3832" strokeDasharray="2 1" strokeWidth=".8" />

      {/* right end cap */}
      <path
        d="M1117 470c22-2 40 12 47 31 5 12 6 26 5 44v60l-110 128h-20c-18 0-31-6-36-25-6-44-5-90 4-126 10-36 50-108 110-112z"
        fill="url(#cap)"
      />
      <path
        d="M1169 545c1-20 0-32-5-44-7-19-25-33-47-31-60 4-100 76-110 112-9 36-10 82-4 126 5 19 18 25 36 25h8"
        stroke="#0d0d0d"
        strokeWidth="1.8"
      />
      <path d="M1108 472c-54 8-90 68-104 108-6 20-8 40-8 66" stroke="#0d0d0d" strokeWidth="1.5" />
      <circle cx="1040" cy="669" r="1.5" fill="#222" />

      {/* hinges */}
      {[
        [901, 351],
        [1041, 420],
      ].map(([x, y]) => (
        <g key={x} transform={`translate(${x} ${y})`}>
          <path d="M4 4l10 5" stroke="#111" strokeWidth="9" strokeLinecap="round" />
          <path d="M4 4l8 4" stroke="#6e6f6d" strokeWidth="7" strokeLinecap="round" />
          <path d="M6 1l-2 7M9 3l-2 7" stroke="#111" />
          <ellipse cx="14" cy="9" rx="3" ry="4" fill="#222" />
        </g>
      ))}

      {/* lid handle */}
      <path d="M750 473c-14 2-19 14-10 20l195 116c10 6 30 6 39-5" stroke="#1c1c1c" strokeWidth="10" />
      <path d="M750 473c-14 2-19 14-10 20l195 116c10 6 30 6 39-5" stroke="#746e6b" strokeWidth="9" />
      <path d="M738 490l198 117c10 5 28 5 37-4" stroke="#a39a94" strokeWidth="3" />
      <path d="M738 497l196 117" stroke="#494543" />
      <path d="M736 497l5-11M932 614l5-11M971 600l6 9M744 470l2 9" stroke="#111" />
      <ellipse cx="751" cy="473" rx="3" ry="6" fill="#5b5b59" stroke="#151515" />
      <ellipse cx="977" cy="604" rx="3" ry="6" fill="#5b5b59" stroke="#151515" />

      {/* pellet hopper */}
      <path d="M1052 585l6-4 82 50-8 186-86-52z" fill="#646561" stroke="#151515" strokeWidth="1.2" />
      <path d="M1149 632l69-42-14 180-63 48z" fill="url(#side)" stroke="#151515" strokeWidth="1.2" />
      <path d="M1140 630h9l-8 188-9-1z" fill="#777873" stroke="#222" />
      <path d="M1058 576v12l81 46c4 1 8 1 11-1l71-46v-13z" fill="#6a6a66" stroke="#151515" strokeWidth="1.2" />
      <path d="M1137 529l84 42c2 2 2 4 0 6l-73 45c-3 2-6 2-9 0l-80-46z" fill="url(#hopperTop)" stroke="#0d0d0d" strokeWidth="1.5" />
      <path d="M1139 624v9M1150 624v9M1060 600l80 47M1053 585v22l7 3v12l-5-2-3 120 5 3-1 28" stroke="#222" />
      <path d="M1150 648l5 3-3 74 9 17M1152 725l57-36-19 34" stroke="#1c1c1c" />
      <path d="M1073 644l52 29-1 27-52-29z" fill="#1f2020" stroke="#0b0b0b" strokeWidth="1.5" />
      <path d="M1073 664l36 20 13 5v8l-49-27z" fill="#a39d80" />
      <path d="M1086 657l23 13v12l-23-13z" fill="#2b2b2b" stroke="#0b0b0b" />
      <circle cx="1112" cy="684" r="4.500" fill="#0e0e0e" />
      <circle cx="1056" cy="612" r="1.800" fill="#111" />
      <circle cx="1052" cy="754" r="1.800" fill="#111" />
      <circle cx="1092" cy="791" r="1.500" fill="#111" />
      <circle cx="1172" cy="791" r="1.500" fill="#111" />

      {/* front wheel */}
      {[18, 15, 12, 9, 6, 3].map((d) => (
        <ellipse key={d} cx={990 + d} cy={897 - d / 2} rx="27" ry="40" transform={`rotate(-20 ${990 + d} ${897 - d / 2})`} fill="#131313" />
      ))}
      {treads.map(([x, y]) => (
        <path key={y} d={`M${x} ${y}l17 -8`} stroke="#3a3a39" />
      ))}
      <ellipse cx="990" cy="897" rx="26" ry="39" transform="rotate(-20 990 897)" fill="#2a2a29" stroke="#0a0a0a" />
      <ellipse cx="995" cy="897" rx="9" ry="13" transform="rotate(-20 995 897)" stroke="#0a0a0a" />
      <ellipse cx="994" cy="897" rx="5" ry="7" transform="rotate(-20 994 897)" fill="#242423" stroke="#0a0a0a" />
    </svg>
  );
}

function ViewCube() {
  return (
    <svg viewBox="1812 160 90 104" className="absolute right-[10px] top-4 h-[104px] w-[90px]" role="img" aria-label="View cube">
      <defs>
        <radialGradient id="cubeShadow">
          <stop offset="0" stopColor="#999" />
          <stop offset="1" stopColor="#fff" stopOpacity="0" />
        </radialGradient>
      </defs>
      <ellipse cx="1860" cy="230" rx="40" ry="20" fill="url(#cubeShadow)" />
      <path d="M1857 170l34 16-34 20-35-19z" fill="#f7f7f7" stroke="#aaa" />
      <path d="M1822 187l35 19v41l-33-22z" fill="#ececec" stroke="#bbb" />
      <path d="M1891 186l-34 20v41l31-23z" fill="#e6e6e6" stroke="#aaa" />
      <path d="M1820 180l4 45" stroke="#8a8aee" strokeWidth="2" />
      <path d="M1825 226l37 26" stroke="#f0908c" strokeWidth="2" />
      <g fontFamily="Liberation Sans" fontWeight="700" fill="#999" fontSize="8">
        <text x="1827" y="213" transform="rotate(25 1827 213)">
          FRONT
        </text>
        <text x="1864" y="227" transform="rotate(-33 1864 227)">
          RIGHT
        </text>
        <text x="1848" y="186" transform="rotate(24 1848 186)">
          TOP
        </text>
      </g>
      <text x="1815" y="177" fontSize="12" fontWeight="700" fill="#8a8aee" fontFamily="Liberation Sans">
        Z
      </text>
      <text x="1863" y="261" fontSize="12" fontWeight="700" fill="#f0908c" fontFamily="Liberation Sans">
        X
      </text>
    </svg>
  );
}

const navTools: { name: string; caret?: boolean; art: ReactNode }[] = [
  {
    name: "Orbit",
    caret: true,
    art: (
      <>
        <path d="M9 2v15M9 0l2 3H7z" />
        <ellipse cx="9" cy="9" rx="7.500" ry="3" />
        <path d="M5 10l-2 2 2 2M7 12h5" />
      </>
    ),
  },
  { name: "Look At", art: <path d="M2 6h14v11H2zM5 9h8v5H5zM3 6l3-4 2 2 3-3 2 1" fill="#dfe6f2" /> },
  {
    name: "Pan",
    art: (
      <path
        d="M5 17c-1-3-4-5-4-8 2 0 3 2 4 3L3 4c0-2 2-2 2 0l2 5V2c0-2 2-2 2 0v6l2-6c0-2 2-1 2 0l-1 7 3-4c1-1 2 0 1 1l-2 6c0 2-1 3-2 5z"
        fill="#fff"
      />
    ),
  },
  {
    name: "Zoom",
    art: (
      <>
        <circle cx="6" cy="8" r="4.500" fill="#e3ecf7" />
        <path d="M9 11l4 5" strokeWidth="2.500" />
        <path d="M12 4h5M14.500 1.500v5M12 8h5" />
      </>
    ),
  },
  {
    name: "Zoom Window",
    caret: true,
    art: (
      <>
        <path d="M1 1h15v16H1z" strokeDasharray="2 2" />
        <circle cx="8" cy="8" r="6" fill="#e3f0f2" />
        <path d="M12 12l4 5" strokeWidth="2.500" />
      </>
    ),
  },
  {
    name: "Display Settings",
    caret: true,
    art: (
      <>
        <path d="M1.500 1.500h15v12h-15zM6 14h6v3H6z" fill="#fff" />
        <path d="M4 4h10v7H4z" fill="#8fb3e4" />
      </>
    ),
  },
  {
    name: "Grid and Snaps",
    caret: true,
    art: <path d="M1.500 1.500h15v15h-15zM4.500 1v16M7.500 1v16M10.500 1v16M13.500 1v16M1 4.500h16M1 7.500h16M1 10.500h16M1 13.500h16" strokeWidth=".7" />,
  },
  {
    name: "Viewports",
    caret: true,
    art: (
      <>
        <path d="M1.500 1.500h7v7h-7zM9.500 1.500h7v7h-7zM1.500 9.500h7v7h-7zM9.500 9.500h7v7h-7z" fill="#8fb3e4" />
        <path d="M3.500 3.500h3v3h-3zM11.500 3.500h3v3h-3zM3.500 11.500h3v3h-3zM11.500 11.500h3v3h-3z" stroke="#5e7fb5" />
      </>
    ),
  },
];

function NavBar() {
  return (
    <div className="absolute bottom-[5px] left-1/2 z-10 ml-1 flex h-[26px] -translate-x-1/2 items-center gap-[7px] bg-[#f2f2f2] px-[2px]">
      {navTools.map(({ name, caret, art }) => (
        <button key={name} aria-label={name} className="flex items-center">
          <svg viewBox="0 0 18 18" className="h-[18px] w-[18px]" fill="none" stroke="#3f4350" aria-hidden="true">
            {art}
          </svg>
          {caret && <Caret className="text-[#333]" />}
        </button>
      ))}
    </div>
  );
}

function SidePanelHandle() {
  return (
    <button aria-label="Open side panel" className="absolute right-0 top-[282px] h-[96px] w-6">
      <svg viewBox="0 0 24 96" className="h-[96px] w-6" aria-hidden="true">
        <path d="M14 62v12c0 8 4 16 10 18V62z" fill="#999" />
        <path d="M.5.500H24V75L.5 52z" fill="#efefef" />
        <path d="M.5 52V.5H24" fill="none" stroke="#999" />
        <path d="M10 24l8-9h6l-7 9 7 10h-7z" fill="#2e8fb8" />
        <path d="M8 34.500h16" stroke="#aaa" />
      </svg>
    </button>
  );
}

function Viewport() {
  return (
    <>
      <div className="absolute inset-0 flex items-center justify-center overflow-hidden">
        <Grill />
      </div>
      <ViewCube />
      <SidePanelHandle />
      <svg viewBox="0 0 12 22" className="absolute left-[401px] top-[307px] h-[22px] w-3" aria-hidden="true">
        <path d="M.8 1v16l3.700-3.500 2.500 7 2.500-1-2.500-6.500h4.500z" fill="#fff" stroke="#222" />
      </svg>
      <NavBar />
      <svg viewBox="0 0 16 16" className="absolute bottom-[10px] right-[5px] h-4 w-4" role="img" aria-label="Autodesk Assistant">
        <path d="M8 1a7 7 0 100 14h7V8a7 7 0 00-7-7z" fill="#000" />
        <path d="M3.500 10.500L9 6h3v5M7 10h5" fill="none" stroke="#fff" strokeWidth="1.5" />
      </svg>
    </>
  );
}

/* ---------- timeline ---------- */

const playback: [string, string][] = [
  ["Go to start", "M1 1h2v12H1zM12 1v12L4 7z"],
  ["Step back", "M9 1v12L1 7zM11 4h2v6h-2z"],
  ["Play", "M2 0v14l11-7z"],
  ["Step forward", "M5 1v12l8-6zM1 4h2v6H1z"],
  ["Go to end", "M11 1h2v12h-2zM2 1v12l8-6z"],
];

function segment(afterIndex: number) {
  if (afterIndex < 0 || afterIndex >= history.length - 1) return "bg-transparent";
  return afterIndex >= MARKER && afterIndex < GROUP_END ? "bg-[#8c8c8c]" : "bg-[#cacaca]";
}

function Timeline() {
  return (
    <footer className="relative flex h-[50px] shrink-0 overflow-hidden border-t border-[#d8d8d8] bg-[#f1f1f1]">
      <div className="absolute left-1 top-0 h-[6px] w-[34px] rounded-b bg-[#cacaca]" />
      <div className="flex w-[142px] shrink-0 items-center gap-[11px] pl-[10px] pt-[6px] text-[#5a5a5a]">
        {playback.map(([name, d]) => (
          <button key={name} aria-label={name}>
            <svg viewBox="0 0 14 14" className="h-[14px] w-[14px]" fill="currentColor" aria-hidden="true">
              <path d={d} />
            </svg>
          </button>
        ))}
      </div>
      <ol className="flex min-w-0 flex-1 overflow-hidden pt-[14px]">
        {history.map((key, i) => {
          const [name, Icon] = features[key];
          const marked = i === MARKER;
          return (
            <li key={i} className="relative flex w-6 shrink-0 flex-col items-center">
              <button aria-label={name} className="h-4 w-4">
                <Icon />
              </button>
              <span className={clsx("mt-[3px] h-[5px] w-[2px]", i > MARKER && i <= GROUP_END ? "bg-[#8c8c8c]" : "bg-[#cacaca]")} />
              <span className="flex h-[2px] w-full">
                <span className={clsx("w-1/2", segment(i - 1))} />
                <span className={clsx("flex-1", segment(i), i === GROUP_END && "ml-[6px]")} />
              </span>
              {marked && (
                <button aria-label="Timeline marker" className="absolute bottom-[6px] flex h-[10px] w-[10px] items-center justify-center bg-[#6d6d6d]">
                  <span className="h-[2px] w-[6px] bg-white" />
                </button>
              )}
            </li>
          );
        })}
      </ol>
      <button aria-label="Timeline settings" className="mr-[6px] mt-2 self-center pb-1 text-[#777]">
        <Gear className="h-4 w-4" />
      </button>
    </footer>
  );
}

export default function App() {
  return (
    <div className="relative flex min-h-screen flex-col overflow-hidden bg-white font-['Liberation_Sans',Arial,sans-serif]">
      <div className="h-[3px] bg-black" />
      <TitleBar />
      <DocumentBar />
      <Ribbon />
      <main className="relative flex flex-1">
        <BrowserPanel />
        <Viewport />
      </main>
      <Timeline />
      <div className="h-1 bg-black" />
      <svg viewBox="0 0 48 24" className="absolute bottom-0 right-[22px] h-6 w-12" aria-hidden="true">
        <path d="M44 7h4v17h-4z" fill="#7a4a2a" />
        <path d="M0 4l4-4v24H0z" fill="#ffb27a" />
        <path d="M4 0h40v24H4z" fill="#fb8a3c" />
        <text x="19" y="20" fontSize="17" fontWeight="700" fill="#fff" fontFamily="Liberation Sans">
          F
        </text>
      </svg>
    </div>
  );
}
